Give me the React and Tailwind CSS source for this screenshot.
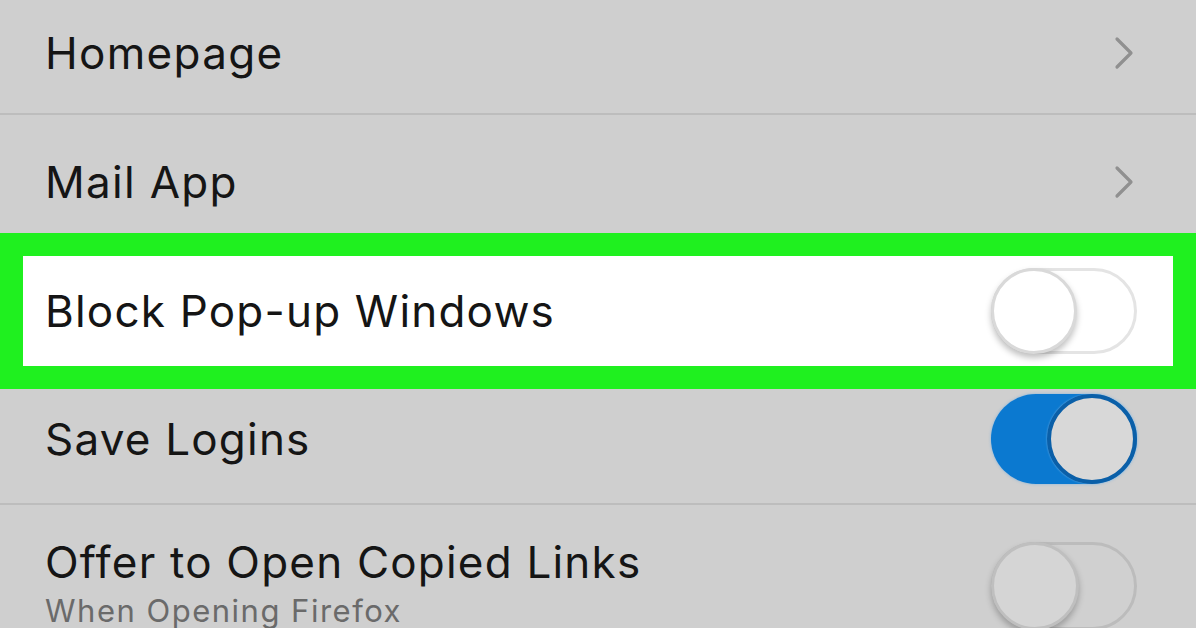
import React from "react";

const font = { fontFamily: "Inter, 'Noto Sans', sans-serif" };

function Chevron() {
  return (
    <svg width="24" height="34" viewBox="0 0 24 34" className="shrink-0">
      <path d="M5 3 L19 17 L5 31" fill="none" stroke="#909090" strokeWidth="3.2" strokeLinecap="round" strokeLinejoin="round" />
    </svg>
  );
}

function ToggleOffWhite() {
  return (
    <div className="relative w-[146px] h-[86px] rounded-full bg-white border-[3px] border-[#e4e4e4] shrink-0">
      <div className="absolute left-[-3px] top-[-3px] w-[86px] h-[86px] rounded-full bg-white border-[3px] border-[#d9d9d9] shadow-[0_4px_6px_rgba(0,0,0,0.25)]" />
    </div>
  );
}

function ToggleOn() {
  return (
    <div className="relative w-[146px] h-[90px] rounded-full bg-[#0b79d0] shrink-0 shadow-[0_0_3px_rgba(80,160,230,0.6)]">
      <div className="absolute right-0 top-0 w-[90px] h-[90px] rounded-full bg-[#d8d8d8] border-[4px] border-[#0a5fa8] shadow-[0_0_2px_rgba(150,200,240,0.8)]" />
    </div>
  );
}

function ToggleOffGray() {
  return (
    <div className="relative w-[146px] h-[88px] rounded-full bg-[#d0d0d0] border-[3px] border-[#bcbcbc] shrink-0">
      <div className="absolute left-[-3px] top-[-3px] w-[88px] h-[88px] rounded-full bg-[#d5d5d5] border-[3px] border-[#bfbfbf] shadow-[0_4px_6px_rgba(0,0,0,0.25)]" />
    </div>
  );
}

export default function App() {
  return (
    <div className="w-[1196px] h-[628px] overflow-hidden bg-[#cfcfcf] flex flex-col text-[#151515]" style={font}>
      {/* Homepage */}
      <div className="h-[115px] shrink-0 flex items-center justify-between pl-[45px] pr-[60px] pb-[8px] border-b-2 border-[#bdbdbd]">
        <span className="text-[44px] leading-none tracking-[1.3px]">Homepage</span>
        <Chevron />
      </div>
      {/* Mail App */}
      <div className="h-[118px] shrink-0 flex items-center justify-between pl-[45px] pr-[60px] pt-[16px]">
        <span className="text-[44px] leading-none tracking-[1.3px]">Mail App</span>
        <Chevron />
      </div>
      {/* Highlighted */}
      <div className="h-[156px] shrink-0 border-[23px] border-[#1ff01f] bg-white flex items-center justify-between pl-[22px] pr-[36px]">
        <span className="text-[44px] leading-none tracking-[1.2px]">Block Pop-up Windows</span>
        <ToggleOffWhite />
      </div>
      {/* Save Logins */}
      <div className="h-[116px] shrink-0 flex items-center justify-between pl-[45px] pr-[59px] pb-[14px] border-b-2 border-[#bdbdbd]">
        <span className="text-[44px] leading-none tracking-[1.2px]">Save Logins</span>
        <ToggleOn />
      </div>
      {/* Offer */}
      <div className="flex-1 flex justify-between pl-[45px] pr-[59px] pt-[35px]">
        <div className="flex flex-col">
          <span className="text-[44px] leading-none tracking-[1.2px]">Offer to Open Copied Links</span>
          <span className="text-[31px] leading-none tracking-[1.5px] text-[#6a6a6a] mt-[11px]">When Opening Firefox</span>
        </div>
        <div className="pt-[2px]">
          <ToggleOffGray />
        </div>
      </div>
    </div>
  );
}
